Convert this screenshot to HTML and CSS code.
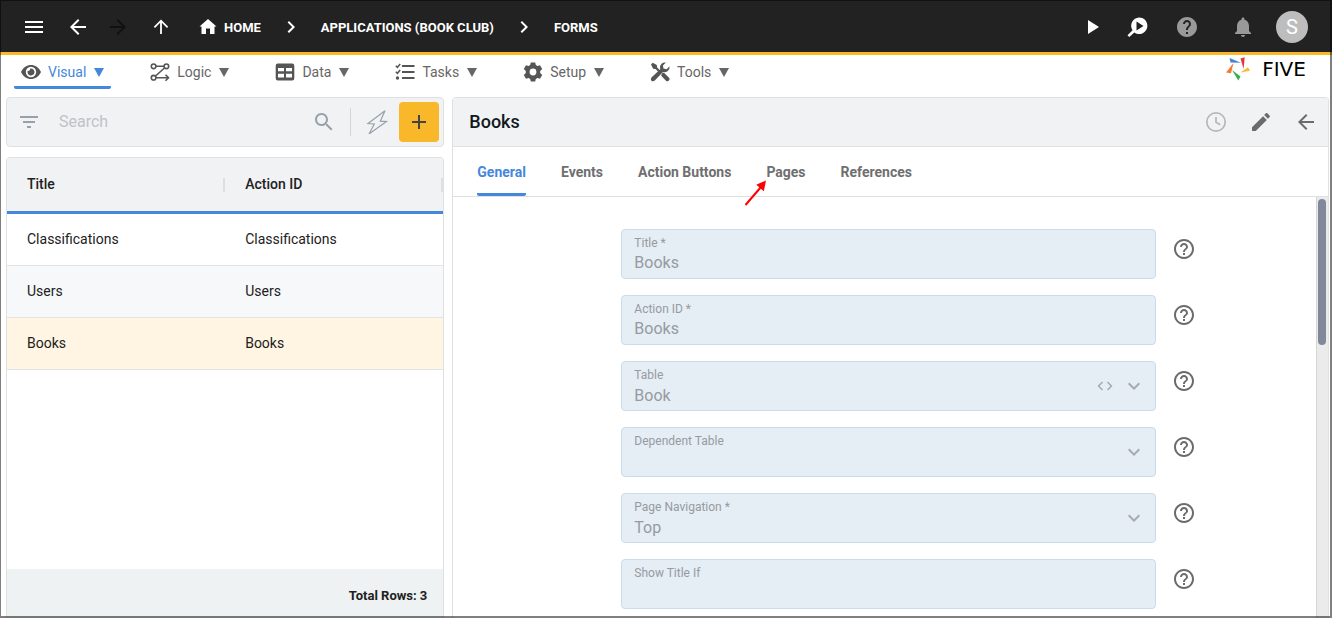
FILE: index.html
```html
<!DOCTYPE html>
<html lang="en">
<head>
<meta charset="utf-8">
<title>Five - Forms</title>
<link rel="stylesheet" href="styles.css">
</head>
<body>
<svg class="defs" aria-hidden="true">
  <symbol id="help" viewBox="0 0 24 24"><path d="M11 18h2v-2h-2v2zm1-16C6.480 2 2 6.480 2 12s4.480 10 10 10 10-4.480 10-10S17.520 2 12 2zm0 18c-4.410 0-8-3.590-8-8s3.590-8 8-8 8 3.590 8 8-3.590 8-8 8zm0-14c-2.210 0-4 1.790-4 4h2c0-1.100.9-2 2-2s2 .9 2 2c0 2-3 1.750-3 5h2c0-2.250 3-2.500 3-5 0-2.210-1.790-4-4-4z"/></symbol>
  <symbol id="back" viewBox="0 0 24 24"><path d="M20 11H7.830l5.590-5.590L12 4l-8 8 8 8 1.410-1.410L7.830 13H20v-2z"/></symbol>
  <symbol id="next" viewBox="0 0 24 24"><path d="M10 6L8.590 7.410 13.170 12l-4.580 4.590L10 18l6-6z"/></symbol>
  <symbol id="expand" viewBox="0 0 24 24"><path d="M7.410 8.590L12 13.170l4.590-4.580L18 10l-6 6-6-6z"/></symbol>
</svg>
<div class="app">
  <header class="topbar">
    <button class="icon-btn menu" aria-label="Menu"><svg viewBox="0 0 24 24"><path d="M3 18h18v-2H3v2zm0-5h18v-2H3v2zm0-7v2h18V6H3z"/></svg></button>
    <button class="icon-btn back" aria-label="Back"><svg><use href="#back"/></svg></button>
    <button class="icon-btn forward" aria-label="Forward" disabled><svg viewBox="0 0 24 24"><path d="M12 4l-1.410 1.410L16.170 11H4v2h12.170l-5.580 5.590L12 20l8-8z"/></svg></button>
    <button class="icon-btn up" aria-label="Up"><svg viewBox="0 0 24 24"><path d="M5.400 12.300L12 5.700l6.600 6.600M12 6v13" fill="none" stroke="currentColor" stroke-width="1.800"/></svg></button>
    <nav class="crumbs" aria-label="Breadcrumb">
      <a href="#home"><svg viewBox="0 0 24 24"><path d="M10 19v-5.500h4V19h4.500v-7.500H20.500L12 4l-8.500 7.500h2V19z"/></svg>HOME</a>
      <svg><use href="#next"/></svg>
      <a href="#applications">APPLICATIONS (BOOK CLUB)</a>
      <svg><use href="#next"/></svg>
      <a href="#forms">FORMS</a>
    </nav>
    <div class="actions">
      <button class="icon-btn" aria-label="Run"><svg viewBox="0 0 24 24"><path d="M7 5v14l11-7z"/></svg></button>
      <button class="icon-btn inspect" aria-label="Inspect"><svg viewBox="0 0 24 24"><path fill-rule="evenodd" d="M13 2.500a8.300 8.300 0 1 1-4.700 15.100L3.300 22 1.500 20.200l5-4.900A8.300 8.300 0 0 1 13 2.500zM10.500 6.500v9l7-4.500z"/></svg></button>
      <button class="icon-btn dim" aria-label="Help"><svg viewBox="0 0 24 24"><path d="M12 2C6.480 2 2 6.480 2 12s4.480 10 10 10 10-4.480 10-10S17.520 2 12 2zm1 17h-2v-2h2v2zm2.070-7.750l-.9.920C13.450 12.900 13 13.500 13 15h-2v-.5c0-1.100.450-2.100 1.170-2.830l1.240-1.260c.370-.360.590-.860.590-1.410 0-1.100-.9-2-2-2s-2 .9-2 2H8c0-2.210 1.790-4 4-4s4 1.790 4 4c0 .880-.360 1.680-.930 2.250z"/></svg></button>
      <button class="icon-btn dim bell" aria-label="Notifications"><svg viewBox="0 0 24 24"><path d="M12 22c1.100 0 2-.9 2-2h-4c0 1.100.890 2 2 2zm6-6v-5c0-3.070-1.640-5.640-4.500-6.320V4c0-.830-.670-1.500-1.500-1.500s-1.500.670-1.500 1.500v.680C7.630 5.360 6 7.920 6 11v5l-2 2v1h16v-1l-2-2z"/></svg></button>
      <button class="avatar" aria-label="Account">S</button>
    </div>
  </header>

  <nav class="mainnav" aria-label="Main">
    <button class="nav-item active"><svg viewBox="0 0 20 20"><path fill-rule="evenodd" d="M0 10C2 5.500 6 3 10 3s8 2.500 10 7c-2 4.500-6 7-10 7S2 14.500 0 10zm10-5.200a5.200 5.200 0 1 0 0 10.400 5.200 5.200 0 0 0 0-10.400zm0 1.700a3.500 3.500 0 1 1-3.300 2.300A1.800 1.800 0 0 0 9 6.700z"/></svg>Visual<i class="caret"></i></button>
    <button class="nav-item"><svg viewBox="0 0 20 20"><g fill="none" stroke="currentColor" stroke-width="1.600"><circle cx="3.600" cy="4.300" r="2.300"/><circle cx="16.400" cy="4.300" r="2.300"/><circle cx="3.600" cy="15.700" r="2.300"/><path d="M6 4.300h8M14.500 6l-9 8M6 15.700h12M15.500 12.700l3 3-3 3"/></g></svg>Logic<i class="caret"></i></button>
    <button class="nav-item"><svg viewBox="0 0 20 20"><path fill-rule="evenodd" d="M3 1.500h14A2.200 2.200 0 0 1 19.300 3.700v12.600a2.200 2.200 0 0 1-2.300 2.200H3A2.200 2.200 0 0 1 .7 16.300V3.700A2.200 2.200 0 0 1 3 1.500zM3 6v3.300h6V6zm8 0v3.300h6V6zM3 11.800V15.500h6v-3.700zm8 0V15.500h6v-3.700z"/></svg>Data<i class="caret"></i></button>
    <button class="nav-item"><svg viewBox="0 0 20 20"><g fill="none" stroke="currentColor"><path stroke-width="2" d="M7 4h12.500M7 10h12.500M7 16h12.500"/><path stroke-width="1.500" d="M.8 3.800l1.600 1.500L5.200 2M.8 9.800l1.600 1.500L5.200 8"/></g><circle cx="2.500" cy="16" r="1.700"/></svg>Tasks<i class="caret"></i></button>
    <button class="nav-item"><svg viewBox="2 2 20 20"><path fill-rule="evenodd" d="M9.800 2.400h4.400l.6 2.700 1.600.9 2.600-.8 2.200 3.800-2 1.900v2.200l2 1.900-2.200 3.800-2.600-.8-1.600.9-.6 2.700H9.800l-.6-2.700-1.600-.9-2.600.8L2.800 15l2-1.900v-2.200l-2-1.900L5 5.200l2.600.8 1.600-.9zM12 8.600a3.400 3.400 0 1 0 0 6.800 3.400 3.400 0 0 0 0-6.800z"/></svg>Setup<i class="caret"></i></button>
    <button class="nav-item"><svg viewBox="0 0 20 20"><path d="M1 2.500L2.800.8l4 2.300.4 2.400 3.200 3.200-1.600 1.600-3.300-3.200-2.400-.4zM12 11.200l2-.5 5 5c1.800 1.900-1 4.900-3 3l-4.800-4.900z"/><path d="M19.500 4.500a5 5 0 0 1-6.500 5.400l-8.200 8.600C2.300 20.800-.6 17.600 1.700 15.300L10.300 7.200A5 5 0 0 1 15.900.6l-3 3 .6 3 3 .6z"/></svg>Tools<i class="caret"></i></button>
    <a class="brand" href="#five"><svg viewBox="0 0 24 24"><path fill="#4285d6" d="M3.500 1l1 4.500 10.500.3z"/><path fill="#e0383b" d="M14.500 1.500L18.700.3 17.600 12z"/><path fill="#fbba2a" d="M14.500 15.600L22 10.300l2 3.400z"/><path fill="#3daa54" d="M6 13l8.500 6.500-2.200 4z"/><path fill="#f47b35" d="M0 15.500L7.500 6 5 16.300z"/></svg><span>FIVE</span></a>
  </nav>

  <main class="workspace">
    <section class="list-pane">
      <div class="toolbar">
        <button class="icon-btn" aria-label="Filter"><svg viewBox="0 0 24 24"><path d="M10 18h4v-2h-4v2zM3 6v2h18V6H3zm3 7h12v-2H6v2z"/></svg></button>
        <input class="search" type="text" placeholder="Search" aria-label="Search">
        <button class="icon-btn" aria-label="Find"><svg viewBox="0 0 24 24"><path d="M15.500 14h-.790l-.280-.270C15.410 12.590 16 11.110 16 9.500 16 5.910 13.090 3 9.500 3S3 5.910 3 9.500 5.910 16 9.500 16c1.610 0 3.090-.590 4.230-1.570l.270.280v.790l5 4.990L20.490 19l-4.990-5zm-6 0C7.010 14 5 11.990 5 9.500S7.010 5 9.500 5 14 7.010 14 9.500 11.990 14 9.500 14z"/></svg></button>
        <span class="divider"></span>
        <button class="icon-btn" aria-label="Quick actions"><svg viewBox="0 0 24 24"><path fill="none" stroke="currentColor" stroke-width="1.200" d="M20 .8L3 13.600l6.300.4L4 24 21.500 11.600l-6.200-.4z"/></svg></button>
        <button class="add" aria-label="Add"><svg viewBox="0 0 24 24"><path d="M19 13h-6v6h-2v-6H5v-2h6V5h2v6h6v2z"/></svg></button>
      </div>
      <div class="grid-card">
        <table class="records">
          <thead><tr><th>Title</th><th>Action ID</th></tr></thead>
          <tbody>
            <tr><td>Classifications</td><td>Classifications</td></tr>
            <tr><td>Users</td><td>Users</td></tr>
            <tr class="selected"><td>Books</td><td>Books</td></tr>
          </tbody>
        </table>
        <div class="summary">Total Rows: 3</div>
      </div>
    </section>

    <section class="detail-pane">
      <div class="detail-head">
        <h1>Books</h1>
        <button class="icon-btn faint" aria-label="History"><svg viewBox="0 0 24 24"><path fill="none" stroke="currentColor" stroke-width="1.700" d="M21.200 12a9.200 9.200 0 1 1-18.400 0 9.200 9.200 0 0 1 18.400 0zM12 7v5.300l4.300 2.400"/></svg></button>
        <button class="icon-btn" aria-label="Edit"><svg viewBox="0 0 24 24"><path d="M3 17.250V21h3.750L17.810 9.940l-3.750-3.750L3 17.250zM20.710 7.040c.390-.390.390-1.020 0-1.410l-2.340-2.340c-.390-.390-1.020-.390-1.410 0l-1.830 1.830 3.750 3.750 1.830-1.830z"/></svg></button>
        <button class="icon-btn" aria-label="Close"><svg><use href="#back"/></svg></button>
      </div>
      <div class="tabs" role="tablist">
        <button role="tab" aria-selected="true" class="tab active">General</button>
        <button role="tab" class="tab">Events</button>
        <button role="tab" class="tab">Action Buttons</button>
        <button role="tab" class="tab">Pages<svg class="pointer" viewBox="0 0 24 28"><path d="M1.500 26L17 8" stroke="#f00" stroke-width="2"/><path fill="#f00" d="M22 1.500l-2.200 10.800-7.500-6.600z"/></svg></button>
        <button role="tab" class="tab">References</button>
      </div>
      <div class="scroll-area">
        <form class="form">
          <div class="row"><div class="field"><label for="title">Title *</label><input id="title" type="text" value="Books" disabled></div><button type="button" class="icon-btn" aria-label="Help"><svg><use href="#help"/></svg></button></div>
          <div class="row"><div class="field"><label for="action">Action ID *</label><input id="action" type="text" value="Books" disabled></div><button type="button" class="icon-btn" aria-label="Help"><svg><use href="#help"/></svg></button></div>
          <div class="row"><div class="field"><label for="table">Table</label><select id="table" disabled><option>Book</option></select><span class="adorn"><svg viewBox="0 0 24 24"><path d="M9.400 16.600L4.800 12l4.600-4.600L8 6l-6 6 6 6 1.400-1.400zm5.200 0l4.600-4.600-4.600-4.600L16 6l6 6-6 6-1.400-1.400z"/></svg><svg><use href="#expand"/></svg></span></div><button type="button" class="icon-btn" aria-label="Help"><svg><use href="#help"/></svg></button></div>
          <div class="row"><div class="field"><label for="dependent">Dependent Table</label><select id="dependent" disabled><option></option></select><span class="adorn"><svg><use href="#expand"/></svg></span></div><button type="button" class="icon-btn" aria-label="Help"><svg><use href="#help"/></svg></button></div>
          <div class="row"><div class="field"><label for="navigation">Page Navigation *</label><select id="navigation" disabled><option>Top</option></select><span class="adorn"><svg><use href="#expand"/></svg></span></div><button type="button" class="icon-btn" aria-label="Help"><svg><use href="#help"/></svg></button></div>
          <div class="row"><div class="field"><label for="showif">Show Title If</label><input id="showif" type="text" disabled></div><button type="button" class="icon-btn" aria-label="Help"><svg><use href="#help"/></svg></button></div>
        </form>
        <div class="track"><div class="thumb"></div></div>
      </div>
    </section>
  </main>
</div>
</body>
</html>
```
FILE: styles.css
```css
* { box-sizing: border-box; }
body { margin: 0; font-family: Roboto, "Liberation Sans", sans-serif; font-size: 14px; color: #212121; }
button, input, select { font: inherit; color: inherit; margin: 0; padding: 0; border: 0; background: none; }
a { color: inherit; text-decoration: none; }
svg { display: block; width: 24px; height: 24px; fill: currentColor; flex: none; }
.defs { display: none; }

.app { height: 100vh; display: flex; flex-direction: column; overflow: hidden; position: relative; background: #fff; }
.app::after { content: ""; position: absolute; inset: 0; border: solid rgba(0, 0, 0, .5); border-width: 1px 2px 2px 1px; pointer-events: none; }
.icon-btn { display: block; flex: none; }

/* Top bar */
.topbar { flex: none; height: 55px; padding: 2px 24px 0 22px; display: flex; align-items: center; background: #222; color: #fff; border-bottom: 3px solid #fbb829; }
.menu { margin-right: 20px; }
.forward { margin: 0 19px 0 16px; color: #111; }
.up { margin-right: 23px; }
.crumbs { display: flex; align-items: center; gap: 18px; font-size: 13px; font-weight: 700; }
.crumbs a { display: flex; align-items: center; gap: 4px; white-space: nowrap; }
.actions { margin-left: auto; display: flex; align-items: center; gap: 21px; }
.inspect { margin-right: 4px; }
.dim { color: #999; }
.bell { margin-left: 11px; }
.avatar { width: 32px; height: 32px; border-radius: 50%; background: #bdbdbd; color: #fff; font-size: 20px; }

/* Main navigation */
.mainnav { flex: none; height: 42px; padding: 0 20px 8px 14px; display: flex; gap: 32px; color: #666; }
.nav-item { display: flex; align-items: center; padding: 3px 7px 0; gap: 7px; border-bottom: 3px solid transparent; border-radius: 2px; }
.nav-item svg { width: 20px; height: 20px; color: #555; }
.nav-item.active { color: #4587db; border-bottom-color: #4587db; }
.caret { margin-left: 1px; border: 5px solid transparent; border-top: 9px solid currentColor; border-bottom: 0; }
.brand { margin-left: auto; display: flex; align-items: center; gap: 6px; padding-bottom: 6px; color: #000; font: 20px/20px "DejaVu Sans", sans-serif; }
.brand span { min-width: 56px; text-align: center; }

/* Workspace */
.workspace { flex: 1; min-height: 0; display: grid; grid-template-columns: 1fr 2fr; gap: 8px; padding: 0 3px 0 6px; }
.list-pane { display: flex; flex-direction: column; gap: 10px; min-height: 0; }
.toolbar { flex: none; height: 50px; display: flex; align-items: center; padding: 0 4px 0 10px; border: 1px solid #dfe0e1; border-radius: 4px; background: #f1f2f4; color: #98a1a9; }
.search { flex: 1; min-width: 0; margin: 0 12px 0 18px; padding-bottom: 2px; font-size: 16px; outline: 0; }
.search::placeholder { color: #c0c2c4; opacity: 1; }
.divider { width: 1px; height: 28px; margin: 0 14px; background: #d3d5d7; }
.add { width: 40px; height: 40px; margin-left: 10px; padding: 8px; border-radius: 4px; background: #f8b829; color: #444; }

.grid-card { flex: 1; min-height: 0; display: flex; flex-direction: column; border: 1px solid #dfe0e1; border-bottom: 0; border-radius: 4px 4px 0 0; }
.records { width: 100%; table-layout: fixed; border-collapse: separate; border-spacing: 0; text-align: left; }
.records th { height: 56px; padding: 0 20px 2px; font-weight: 500; background: linear-gradient(#dddfe1, #dddfe1) right center / 2px 14px no-repeat #f1f2f4; border-bottom: 3px solid #4587db; }
.records td { height: 52px; padding: 0 20px 2px; border-bottom: 1px solid #e2e3e5; }
.records tr:nth-child(2) td { background: #f7f8fa; }
.records .selected td { background: #fff5e2; }
.summary { margin-top: auto; height: 49px; padding: 3px 16px 0; display: flex; align-items: center; justify-content: flex-end; background: #eef2f3; font-size: 13px; font-weight: 700; }

/* Detail pane */
.detail-pane { display: flex; flex-direction: column; min-width: 0; min-height: 0; border: 1px solid #dfe0e1; border-bottom: 0; border-radius: 4px 4px 0 0; }
.detail-head { flex: none; height: 49px; display: flex; align-items: center; gap: 21px; padding: 0 10px 0 16px; background: #f1f2f4; border-bottom: 1px solid #dfe0e1; color: #6b6b6b; }
.detail-head h1 { flex: 1; margin: 0; padding-bottom: 2px; font-size: 18px; font-weight: 500; color: #111820; }
.faint { color: #b5b7b9; }
.tabs { flex: none; height: 50px; display: flex; gap: 35px; padding: 0 24px; border-bottom: 1px solid #dfe0e1; color: #6f6f6f; }
.tab { position: relative; font-weight: 700; border-top: 3px solid transparent; border-bottom: 3px solid transparent; border-radius: 2px; }
.tab.active { color: #4587db; border-bottom-color: #4587db; }
.pointer { position: absolute; left: -22px; top: 29px; width: 24px; height: 28px; }
.scroll-area { flex: 1; min-height: 0; display: flex; overflow: hidden; }
.form { flex: 1; display: flex; flex-direction: column; gap: 16px; padding: 32px 120px 32px 168px; }
.row { display: flex; gap: 16px; color: #6b6b6b; }
.row > .icon-btn { align-self: flex-start; margin-top: 8px; }
.field { flex: 1; height: 50px; display: grid; grid-template-columns: 1fr auto; grid-template-rows: 14px 24px; padding: 6px 9px 0 12px; background: #e5edf5; border: 1px solid #c9dced; border-radius: 4px; color: #969ba1; }
.field label { grid-column: 1 / 3; font-size: 12px; line-height: 14px; }
.field input, .field select { appearance: none; width: 100%; height: 24px; font-size: 16px; opacity: 1; color: #969ba1; }
.field select { padding-top: 2px; }
.adorn { display: flex; gap: 5px; margin-top: -8px; color: #a5abb1; }
.adorn svg:first-child:not(:last-child) { width: 18px; margin-right: 3px; }
.track { width: 12px; padding: 2px 2px 0 1px; background: #ebebeb; border-left: 1px solid #d5d5d5; }
.thumb { width: 8px; height: 146px; border-radius: 4px; background: #808899; }
```
